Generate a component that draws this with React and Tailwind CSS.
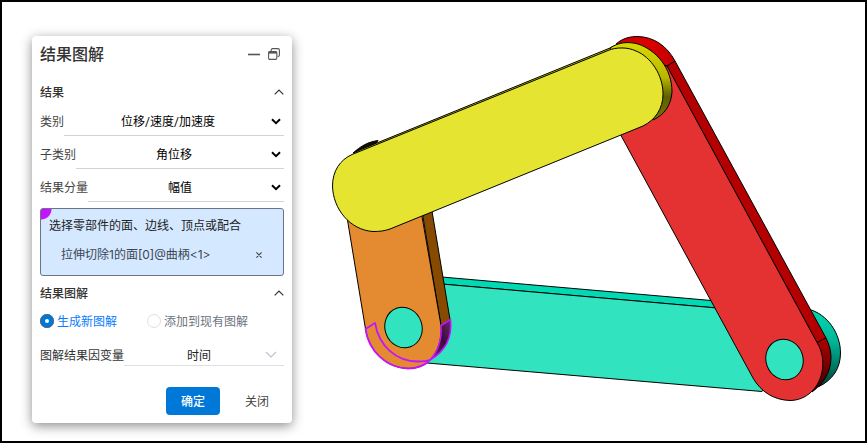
import { useState } from "react";

function ChevronUp() {
  return (
    <svg viewBox="0 0 10 6" className="h-[6px] w-[10px]" fill="none" stroke="#333" strokeWidth="1.2">
      <path d="M0.7 5.3 5 1 9.3 5.3" />
    </svg>
  );
}

function SectionHeader({ children, open, onToggle }) {
  return (
    <h3>
      <button
        type="button"
        aria-expanded={open}
        onClick={onToggle}
        className="flex h-8 w-full items-center justify-between text-xs font-medium text-[#333]"
      >
        <span className="pt-0.5">{children}</span>
        <ChevronUp />
      </button>
    </h3>
  );
}

function SelectRow({ id, label, options }) {
  return (
    <div className="flex h-[26px] items-stretch">
      <label htmlFor={id} className="flex shrink-0 items-center pb-0.5 text-[#444]">
        {label}
      </label>
      <div className="grid min-w-0 flex-1 border-b border-[#ced4da] pb-px">
        <select
          id={id}
          className="col-start-1 row-start-1 w-full appearance-none bg-transparent pr-3 text-center text-black outline-none [text-align-last:center]"
        >
          {options.map((o) => (
            <option key={o}>{o}</option>
          ))}
        </select>
        <svg
          viewBox="0 0 10 7"
          className="pointer-events-none col-start-1 row-start-1 mr-[3px] mb-0.5 h-[7px] w-[10px] self-center justify-self-end"
          fill="none"
          stroke="#000"
          strokeWidth="2"
        >
          <path d="M1 1.2 5 5.2 9 1.2" />
        </svg>
      </div>
    </div>
  );
}

function Radio({ checked, onChange, children }) {
  return (
    <label className={checked ? "flex items-center gap-[3px] text-[#0a7cff]" : "flex items-center gap-[3px] text-[#6c757d]"}>
      <input
        type="radio"
        name="plot-mode"
        checked={checked}
        onChange={onChange}
        className="size-[14px] appearance-none rounded-full border border-[#dcdfe6] bg-white checked:border-[5px] checked:border-[#0078d7] checked:outline checked:-outline-offset-1 checked:outline-[#54687c]"
      />
      <span className="pt-0.5">{children}</span>
    </label>
  );
}

function ResultPanel() {
  const [mode, setMode] = useState("new");
  const [openResult, setOpenResult] = useState(true);
  const [openPlot, setOpenPlot] = useState(true);
  return (
    <aside className="ml-[30px] mt-[34px] w-[260px] shrink-0 self-start rounded-[4px] bg-white px-2 pb-2 text-xs shadow-[0_3px_12px_rgba(0,0,0,0.45)]">
      <header className="flex h-10 items-center justify-between pb-1">
        <h2 className="pt-0.5 text-base font-medium text-[#333]">结果图解</h2>
        <div className="flex items-center gap-2 pr-1">
          <button type="button" aria-label="最小化" className="flex h-4 w-3 items-center">
            <svg viewBox="0 0 12 12" className="size-3" stroke="#555" strokeWidth="1.6">
              <path d="M0 6.5H12" />
            </svg>
          </button>
          <button type="button" aria-label="还原" className="flex size-3 items-center">
            <svg viewBox="0 0 12 12" className="size-3" fill="none" stroke="#555" strokeWidth="1.1">
              <path d="M3.2 3V2A1.3 1.3 0 0 1 4.5.6H10A1.4 1.4 0 0 1 11.4 2V7A1.4 1.4 0 0 1 10 8.4H9.6" />
              <rect x=".6" y="3.6" width="8.2" height="7.8" rx="1.2" />
              <path d="M.6 4.6H8.8" strokeWidth="2" />
            </svg>
          </button>
        </div>
      </header>

      <section>
        <SectionHeader open={openResult} onToggle={() => setOpenResult(!openResult)}>结果</SectionHeader>
        {openResult && (
          <div className="pt-[2px]">
            <div className="flex flex-col gap-[7px]">
              <SelectRow id="category" label="类别" options={["位移/速度/加速度"]} />
              <SelectRow id="subcategory" label="子类别" options={["角位移"]} />
              <SelectRow id="component" label="结果分量" options={["幅值"]} />
            </div>
            <div className="mt-[6px] h-[68px] overflow-hidden rounded-[3px] border border-[#6b7484] bg-[#d4e8ff] bg-[radial-gradient(circle_at_0_0,#c414ff_10px,transparent_11px)] px-2 pt-[9px]">
              <p className="leading-4 text-[#222]">选择零部件的面、边线、顶点或配合</p>
              <div className="mt-[13px] flex items-center justify-between px-3 font-['Inter','Noto_Sans_CJK_SC',sans-serif] leading-4 text-[#3c4654]">
                <span>拉伸切除1的面[0]@曲柄&lt;1&gt;</span>
                <button type="button" aria-label="移除" className="flex size-[9px] items-center justify-center">
                  <svg viewBox="0 0 6 6" className="size-[6px]" stroke="#444" strokeWidth="1.1">
                    <path d="M.4.4 5.6 5.6M5.6.4.4 5.6" />
                  </svg>
                </button>
              </div>
            </div>
          </div>
        )}
      </section>

      <section className="mt-px">
        <SectionHeader open={openPlot} onToggle={() => setOpenPlot(!openPlot)}>结果图解</SectionHeader>
        {openPlot && (
          <div className="pt-[2px]">
            <div className="flex h-5 items-center gap-[30px]">
              <Radio checked={mode === "new"} onChange={() => setMode("new")}>生成新图解</Radio>
              <Radio checked={mode === "add"} onChange={() => setMode("add")}>添加到现有图解</Radio>
            </div>
            <div className="mt-[9px] flex h-[26px] items-stretch">
              <label htmlFor="variable" className="flex shrink-0 items-center pt-1.5 text-[#333]">图解结果因变量</label>
              <div className="grid min-w-0 flex-1 border-b border-[#dcdfe6] pt-[7px]">
                <select
                  id="variable"
                  className="col-start-1 row-start-1 w-full appearance-none bg-transparent pr-[10px] text-center text-[#222] outline-none [text-align-last:center]"
                >
                  <option>时间</option>
                </select>
                <svg
                  viewBox="0 0 12 7"
                  className="pointer-events-none col-start-1 row-start-1 mr-[7px] mb-1 h-[7px] w-3 self-center justify-self-end"
                  fill="none"
                  stroke="#c0c4cc"
                  strokeWidth="1.2"
                >
                  <path d="M1 1 6 6 11 1" />
                </svg>
              </div>
            </div>
          </div>
        )}
      </section>

      <footer className="mt-[21px] flex justify-end gap-[10px]">
        <button type="button" className="h-7 w-[54px] rounded-[4px] bg-[#0078d7] pt-0.5 font-medium text-white">确定</button>
        <button type="button" className="h-7 w-[54px] rounded-[4px] pt-0.5 text-[#444]">关闭</button>
      </footer>
    </aside>
  );
}

function LinkageModel() {
  return (
    <svg viewBox="292 2 573 439" className="min-w-0 flex-1" role="img" aria-label="曲柄连杆机构">
      <defs>
        <linearGradient id="tealEnd" x1="0" y1="0" x2="0" y2="1">
          <stop offset="0" stopColor="#00d9b3" />
          <stop offset=".4" stopColor="#00b898" />
          <stop offset=".75" stopColor="#007561" />
          <stop offset="1" stopColor="#003d33" />
        </linearGradient>
        <linearGradient id="redEnd" x1="0" y1="0" x2="0" y2="1">
          <stop offset="0" stopColor="#b00000" />
          <stop offset=".5" stopColor="#780000" />
          <stop offset="1" stopColor="#300000" />
        </linearGradient>
        <linearGradient id="redTop" x1="0" y1="0" x2="1" y2="0">
          <stop offset="0" stopColor="#c40000" />
          <stop offset=".5" stopColor="#dc0000" />
          <stop offset="1" stopColor="#c40000" />
        </linearGradient>
        <linearGradient id="yellowEnd" x1="0" y1="0" x2="0" y2="1">
          <stop offset="0" stopColor="#d9d900" />
          <stop offset=".45" stopColor="#b8b800" />
          <stop offset=".7" stopColor="#5e5e00" />
          <stop offset="1" stopColor="#777700" />
        </linearGradient>
        <linearGradient id="pickedEnd" x1="1" y1="0" x2="0" y2="1">
          <stop offset="0" stopColor="#6b2a6b" />
          <stop offset=".45" stopColor="#3a0a3a" />
          <stop offset="1" stopColor="#742a80" />
        </linearGradient>
      </defs>
      <g stroke="#000" strokeWidth="1" strokeLinejoin="round">
        {/* ground link */}
        <path fill="url(#tealEnd)" d="M808 309C828 314 840.5 334 840.5 353C840.5 368 833 380 818 387L800 350Z" />
        <path fill="#00d9b3" d="M436 276.5 740 303 740 310 436 283.5Z" />
        <path fill="#31e4bf" d="M436 283.5 740 310 800 340 762 391.5 427 363Z" />

        {/* rocker */}
        <path fill="#b40000" d="M667 66 675 61 826 338 817 342.5Z" />
        <path fill="url(#redEnd)" d="M817 342.5 826 338C832 350 832 360 829 370C826 379 820 386 812 392Z" />
        <path fill="url(#redTop)" d="M616 44C623 38 630 36.5 638 36.5C654 37 667 46 675 61L667 66 640 66Z" />
        <path fill="#e43232" d="M667 66 817 342.5C822 351 823.5 359 822.5 369C820 388 806 400.5 790 400.5C774 400 761 392 753 378L618 130 640 66Z" />
        <ellipse cx="784.5" cy="359.5" rx="18.5" ry="20.5" transform="rotate(-20 784.5 359.5)" fill="#31e4bf" />

        {/* crank */}
        <path fill="#864b00" d="M421 205 431 205 450 319.5 441 325.5Z" />
        <path fill="#e48a31" d="M345 205 420 205 441 325.5C442 339 438 352 430 360C424 366 417 368.5 408 368.5C387 368 369 352 365.5 329Z" />
        <ellipse cx="403.5" cy="327.5" rx="18.5" ry="20.5" transform="rotate(-20 403.5 327.5)" fill="#31e4bf" />
        <path fill="url(#pickedEnd)" stroke="#c414ff" strokeWidth="1.5" d="M441 325.5 450.5 319.5C452 334 449 349 430 360C438 352 442 339 441 325.5Z" />
        <path
          fill="none"
          stroke="#c414ff"
          strokeWidth="1.8"
          d="M430 360C424 366 417 368.5 408 368.5C387 368 369 352 365.5 329L375 323C379 346 396 361.5 418 361.5C423 361.5 427 361 430 360"
        />

        {/* coupler */}
        <path fill="#111100" d="M353 153C360 147 367 142 378 140.500L374 146Z" />
        <path fill="#cccc00" d="M356 151.500 610 48 614 46 618 50 360 153Z" />
        <path fill="url(#yellowEnd)" d="M610 48C619 42 628 41.5 638 44C656 50 672 68 672 92C671 106 664 115 653 120L630 100Z" />
        <path fill="#e4e431" d="M352 154.500 608 50.500C616 47 628 47 636 51C651 57 663 75 663 94C663 109 655 120 643 126L390 229C384 231 380 231.5 373 231.5C350 230 333 209 332.5 186C332.5 171 340 160 352 154.5Z" />
      </g>
    </svg>
  );
}

export default function App() {
  return (
    <div className="bg-white pb-px font-['Roboto','Noto_Sans_CJK_SC',sans-serif]">
      <main className="flex min-h-[calc(100vh-1px)] border-2 border-black bg-white">
        <ResultPanel />
        <LinkageModel />
      </main>
    </div>
  );
}
